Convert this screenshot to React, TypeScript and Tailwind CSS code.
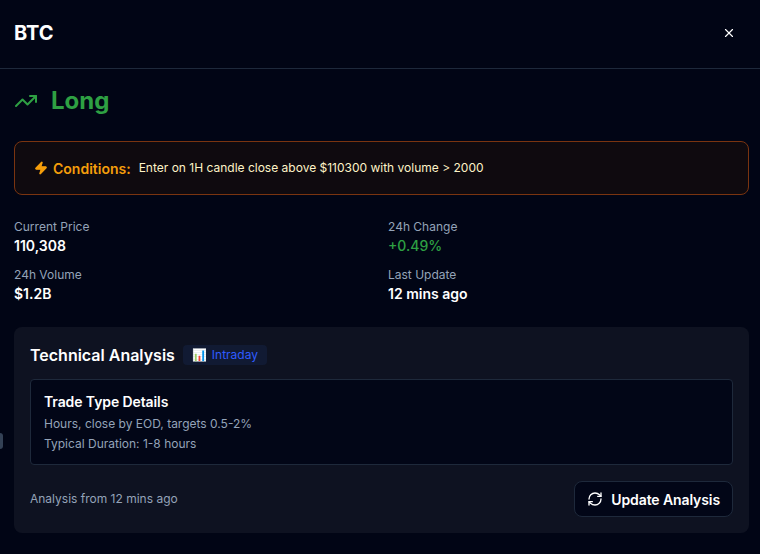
import { RefreshCw, TrendingUp, X, Zap } from 'lucide-react'

type StatProps = {
  label: string
  value: string
  valueClassName?: string
}

function Stat({ label, value, valueClassName = 'font-semibold text-white' }: StatProps) {
  return (
    <div className="flex flex-col">
      <span className="text-[12px] leading-[22px] text-[#94a3b8]">{label}</span>
      <span className={`text-[14px] leading-[16px] ${valueClassName}`}>{value}</span>
    </div>
  )
}

export default function App() {
  return (
    <div className="relative h-[554px] w-[760px] overflow-hidden bg-[#010515] font-['Inter',sans-serif] text-white">
      <div className="absolute left-0 top-[433px] h-[16px] w-[3px] rounded-r-[3px] bg-[#334155]" />

      <header className="flex h-[69px] items-center justify-between border-b border-[#1e293b] pb-[3px] pl-[14px] pr-[24px]">
        <h1 className="text-[20px] leading-[28px] font-bold">BTC</h1>
        <X className="size-[14px] text-white" strokeWidth={2} aria-hidden="true" />
      </header>

      <div className="pl-[14px] pr-[11px]">
        <div className="mt-[16px] flex h-[32px] items-center gap-[13px]">
          <TrendingUp className="size-[24px] text-[#2ea043]" strokeWidth={2} aria-hidden="true" />
          <span className="text-[24px] leading-[32px] font-bold text-[#2ea043]">Long</span>
        </div>

        <div className="mt-[24px] flex h-[54px] items-center rounded-[8px] border border-[#7a3410] bg-[#0f0a0f] pl-[19px]">
          <Zap className="size-[14px] fill-[#f59e0b] text-[#f59e0b]" strokeWidth={2} aria-hidden="true" />
          <span className="ml-[5px] text-[14px] font-semibold text-[#f59e0b]">Conditions:</span>
          <span className="ml-[8px] text-[12px] text-[#fef3c7]">
            Enter on 1H candle close above $110300 with volume &gt; 2000
          </span>
        </div>

        <div className="mt-[21px] grid grid-cols-2 gap-x-[13px] gap-y-[10px]">
          <Stat label="Current Price" value="110,308" />
          <Stat label="24h Change" value="+0.49%" valueClassName="font-medium text-[#2ea043]" />
          <Stat label="24h Volume" value="$1.2B" />
          <Stat label="Last Update" value="12 mins ago" />
        </div>

        <section className="mt-[25px] h-[206px] rounded-[8px] bg-[#0e1221] px-[16px] pt-[18px]">
          <div className="flex h-[20px] items-center gap-[8px]">
            <h2 className="text-[16px] leading-[20px] font-semibold">Technical Analysis</h2>
            <span className="flex h-[20px] items-center gap-[5px] rounded-[4px] bg-[#111a33] px-[9px] text-[12px] text-[#2f5bff]">
              <span className="font-['Noto_Color_Emoji',sans-serif] text-[12px]">📊</span>
              Intraday
            </span>
          </div>

          <div className="mt-[14px] h-[86px] rounded-[4px] border border-[#1e293b] bg-[#020617] px-[13px] pt-[13px]">
            <h3 className="text-[14px] leading-[18px] font-semibold tracking-[-0.1px]">Trade Type Details</h3>
            <p className="mt-[3px] text-[12px] leading-[20px] text-[#94a3b8]">Hours, close by EOD, targets 0.5-2%</p>
            <p className="text-[12px] leading-[20px] text-[#94a3b8]">Typical Duration: 1-8 hours</p>
          </div>

          <div className="mt-[16px] flex items-center justify-between">
            <span className="text-[12px] text-[#94a3b8]">Analysis from 12 mins ago</span>
            <button
              className="flex h-[36px] items-center gap-[8px] rounded-[8px] border border-[#1e293b] bg-[#020617] px-[12px] text-[14px] font-semibold tracking-[-0.1px] text-white"
              type="button"
            >
              <RefreshCw className="size-[16px]" strokeWidth={2} aria-hidden="true" />
              Update Analysis
            </button>
          </div>
        </section>
      </div>
    </div>
  )
}
